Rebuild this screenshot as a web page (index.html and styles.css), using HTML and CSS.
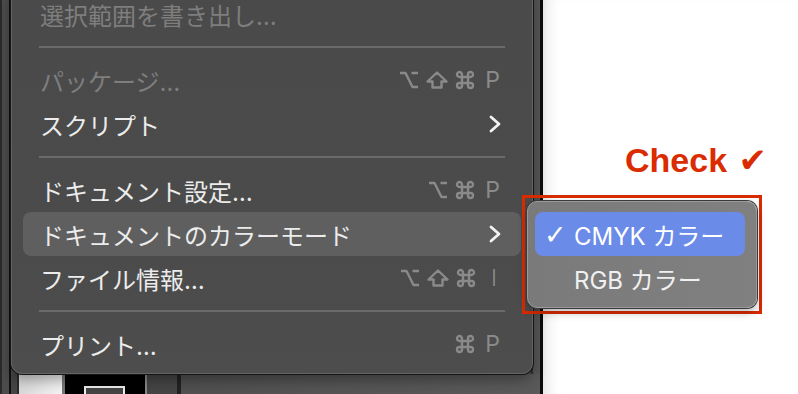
FILE: index.html
```html
<!DOCTYPE html>
<html lang="ja">
<head>
  <meta charset="UTF-8" />
  <title>ファイルメニュー</title>
  <meta name="viewport" content="width=device-width, initial-scale=1" />
  <link rel="stylesheet" href="styles.css">
</head>
<body>
  <div class="workspace">
    <div class="app">
      <div class="rail"></div>
      <div class="main">
        <div class="tray">
          <div class="tray-light"></div>
          <div class="tray-black"><span class="frame-box"></span></div>
          <div class="tray-panel"></div>
          <div class="tray-rest"></div>
        </div>
      </div>
    </div>
    <div class="canvas"></div>
  </div>

  <div class="menu">
    <div class="item disabled"><span class="label">選択範囲を書き出し…</span></div>
    <div class="sep"></div>
    <div class="item disabled">
      <span class="label">パッケージ…</span>
      <span class="keys">
        <svg class="key" width="20" height="18" viewBox="0 0 20 18"><path d="M1 2H6.5L13.5 16H19M12.5 2H19" /></svg>
        <svg class="key" width="22" height="18" viewBox="0 0 22 18"><path d="M11 1.5L20.5 10.5H15.5V16.5H6.5V10.5H1.5Z" /></svg>
        <svg class="key" width="20" height="20" viewBox="0 0 20 20"><path d="M7 7V4.5A2.5 2.5 0 1 0 4.5 7H15.5A2.5 2.5 0 1 0 13 4.5V15.5A2.5 2.5 0 1 0 15.5 13H4.5A2.5 2.5 0 1 0 7 15.5Z" /></svg>
        <span class="letter">P</span>
      </span>
    </div>
    <div class="item">
      <span class="label">スクリプト</span>
      <svg class="chevron" width="12" height="18" viewBox="0 0 12 18"><polyline points="2,2 10,9 2,16" /></svg>
    </div>
    <div class="sep"></div>
    <div class="item">
      <span class="label">ドキュメント設定…</span>
      <span class="keys">
        <svg class="key" width="20" height="18" viewBox="0 0 20 18"><path d="M1 2H6.5L13.5 16H19M12.5 2H19" /></svg>
        <svg class="key" width="20" height="20" viewBox="0 0 20 20"><path d="M7 7V4.5A2.5 2.5 0 1 0 4.5 7H15.5A2.5 2.5 0 1 0 13 4.5V15.5A2.5 2.5 0 1 0 15.5 13H4.5A2.5 2.5 0 1 0 7 15.5Z" /></svg>
        <span class="letter">P</span>
      </span>
    </div>
    <div class="item active">
      <span class="label">ドキュメントのカラーモード</span>
      <svg class="chevron" width="12" height="18" viewBox="0 0 12 18"><polyline points="2,2 10,9 2,16" /></svg>
    </div>
    <div class="item">
      <span class="label">ファイル情報…</span>
      <span class="keys">
        <svg class="key" width="20" height="18" viewBox="0 0 20 18"><path d="M1 2H6.5L13.5 16H19M12.5 2H19" /></svg>
        <svg class="key" width="22" height="18" viewBox="0 0 22 18"><path d="M11 1.5L20.5 10.5H15.5V16.5H6.5V10.5H1.5Z" /></svg>
        <svg class="key" width="20" height="20" viewBox="0 0 20 20"><path d="M7 7V4.5A2.5 2.5 0 1 0 4.5 7H15.5A2.5 2.5 0 1 0 13 4.5V15.5A2.5 2.5 0 1 0 15.5 13H4.5A2.5 2.5 0 1 0 7 15.5Z" /></svg>
        <span class="letter thin">I</span>
      </span>
    </div>
    <div class="sep"></div>
    <div class="item">
      <span class="label">プリント…</span>
      <span class="keys">
        <svg class="key" width="20" height="20" viewBox="0 0 20 20"><path d="M7 7V4.5A2.5 2.5 0 1 0 4.5 7H15.5A2.5 2.5 0 1 0 13 4.5V15.5A2.5 2.5 0 1 0 15.5 13H4.5A2.5 2.5 0 1 0 7 15.5Z" /></svg>
        <span class="letter">P</span>
      </span>
    </div>
  </div>

  <div class="note">Check <span class="tick">✔</span></div>
  <div class="callout"></div>

  <div class="submenu">
    <div class="sub-item selected"><span class="check">✓</span>CMYK カラー</div>
    <div class="sub-item"><span class="check"></span>RGB カラー</div>
  </div>
</body>
</html>
```

FILE: styles.css
```css
body {
  margin: 0;
  font-family: "Inter", "Noto Sans CJK JP", sans-serif;
  background: #fff;
  overflow: hidden;
}
.workspace {
  display: flex;
  height: 394px;
}
.app {
  display: flex;
  width: 540px;
  background: #4b4b4b;
  border-right: 3px solid #0b0b0b;
  box-shadow: inset -7px 0 0 #565656, inset -9px 0 0 #303030;
}
.rail {
  width: 7px;
  background: #4c4c4c;
  border-left: 2px solid #2b2b2b;
  border-right: 2px solid #111;
}
.main {
  flex: 1;
  display: flex;
  flex-direction: column;
  justify-content: flex-end;
}
.tray {
  display: flex;
  height: 20px;
  border-left: 6px solid #454545;
}
.tray-light {
  width: 43px;
  border-left: 2px solid #2a2a2a;
  background: linear-gradient(90deg, #d8d8d8, #f4f4f4);
}
.tray-black {
  width: 83px;
  background: #000;
  border-left: 3px solid #777;
  padding-left: 19px;
  padding-top: 12px;
  box-sizing: border-box;
}
.frame-box {
  display: block;
  width: 41px;
  height: 8px;
  border: 2px solid #eee;
  border-bottom: 0;
  background: #444;
  box-sizing: border-box;
}
.tray-panel {
  width: 30px;
  background: #454545;
  border-left: 2px solid #888;
  border-right: 4px solid #222;
}
.tray-rest {
  flex: 1;
  background: linear-gradient(90deg, #505050, #5a5a5a);
}
.canvas {
  flex: 1;
  background: #fff;
  box-shadow: inset 14px 0 14px -10px rgba(0,0,0,0.12);
}

/* ファイルメニュー */
.menu {
  position: absolute;
  left: 11px;
  top: -15px;
  width: 522px;
  box-sizing: border-box;
  padding: 6px 11px 7px 11px;
  background: linear-gradient(180deg, #4a4a4a, #4b4b4b 70%, #4d4d4d);
  border: 1px solid #646464;
  border-radius: 11px;
  box-shadow: 0 0 0 1px #151515, 0 6px 14px rgba(0,0,0,0.35);
}
.item {
  display: flex;
  align-items: center;
  justify-content: space-between;
  height: 44px;
  padding: 0 21px 0 17px;
  border-radius: 8px;
  font-size: 24px;
  color: #ececec;
}
.item.disabled .label {
  color: #7e7e7e;
}
.item.active {
  background: #5f5f5f;
}
.sep {
  height: 2px;
  margin: 10px 16px;
  background: #6a6a6a;
}
.keys {
  display: flex;
  align-items: center;
  gap: 7px;
  color: #8a8a8a;
}
.key path {
  fill: none;
  stroke: #8a8a8a;
  stroke-width: 2.4;
  stroke-linejoin: round;
}
.keys .letter {
  font-size: 23px;
  margin-left: 3px;
}
.keys .thin {
  font-weight: 300;
  margin-right: 3px;
  margin-left: 8px;
}
.chevron {
  margin-right: -1px;
}
.chevron polyline {
  fill: none;
  stroke: #f2f2f2;
  stroke-width: 2.8;
  stroke-linecap: round;
  stroke-linejoin: round;
}

/* 注記 */
.note {
  position: absolute;
  left: 625px;
  top: 143px;
  font-family: "Liberation Sans", Arial, sans-serif;
  font-weight: bold;
  font-size: 34px;
  line-height: 34px;
  color: #da2c00;
}
.tick {
  font-family: "DejaVu Sans", sans-serif;
  font-weight: normal;
  font-size: 34px;
  margin-left: 2px;
}
.callout {
  position: absolute;
  left: 522px;
  top: 195px;
  width: 240px;
  height: 119px;
  box-sizing: border-box;
  border: 3px solid #d92b00;
}

/* サブメニュー */
.submenu {
  position: absolute;
  left: 527px;
  top: 201px;
  width: 230px;
  box-sizing: border-box;
  padding: 10px 11px 7px 7px;
  background: linear-gradient(90deg, #7a7a7a, #808080);
  border: 1px solid #9a9a9a;
  border-radius: 10px;
  box-shadow: 0 0 0 1px #3a3a3a, 0 4px 10px rgba(0,0,0,0.3);
}
.sub-item {
  display: flex;
  align-items: center;
  height: 44px;
  padding-left: 9px;
  border-radius: 8px;
  font-size: 24px;
  color: #f0f0f0;
}
.sub-item.selected {
  background: #6b8be8;
  color: #fff;
}
.check {
  display: inline-block;
  width: 30px;
  font-family: "DejaVu Sans", sans-serif;
  font-size: 27px;
  font-weight: bold;
}
```
